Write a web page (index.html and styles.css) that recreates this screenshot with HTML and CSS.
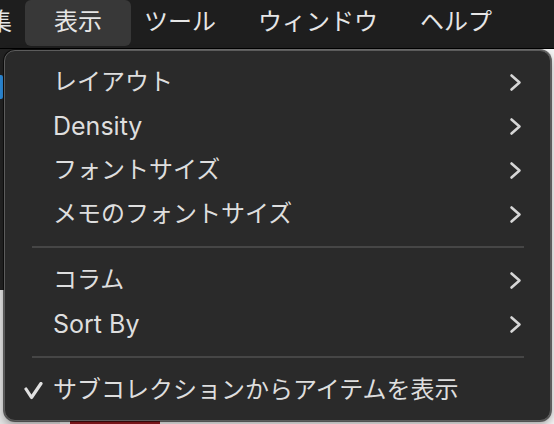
FILE: index.html
```html
<!DOCTYPE html>
<html lang="ja">
<head>
<meta charset="utf-8">
<title>表示メニュー</title>
<link rel="stylesheet" href="styles.css">
</head>
<body>
<header class="menubar">
  <div class="mb-item">編集</div>
  <div class="mb-item active">表示</div>
  <div class="mb-item">ツール</div>
  <div class="mb-item">ウィンドウ</div>
  <div class="mb-item">ヘルプ</div>
</header>
<main class="app">
  <div class="side">
    <div class="side-dark"><span class="side-mark"></span></div>
    <div class="side-light"></div>
  </div>
  <div class="content">
    <div class="content-body"></div>
    <div class="content-foot"><span class="foot-red"></span></div>
  </div>
</main>
<nav class="menu">
  <div class="row"><span class="check"></span><span class="label">レイアウト</span><svg class="chev" viewBox="0 0 13 19"><polyline points="2.5,2.5 10.5,9.5 2.5,16.5"/></svg></div>
  <div class="row"><span class="check"></span><span class="label latin">Density</span><svg class="chev" viewBox="0 0 13 19"><polyline points="2.5,2.5 10.5,9.5 2.5,16.5"/></svg></div>
  <div class="row"><span class="check"></span><span class="label">フォントサイズ</span><svg class="chev" viewBox="0 0 13 19"><polyline points="2.5,2.5 10.5,9.5 2.5,16.5"/></svg></div>
  <div class="row"><span class="check"></span><span class="label">メモのフォントサイズ</span><svg class="chev" viewBox="0 0 13 19"><polyline points="2.5,2.5 10.5,9.5 2.5,16.5"/></svg></div>
  <div class="sep"></div>
  <div class="row"><span class="check"></span><span class="label">コラム</span><svg class="chev" viewBox="0 0 13 19"><polyline points="2.5,2.5 10.5,9.5 2.5,16.5"/></svg></div>
  <div class="row"><span class="check"></span><span class="label latin">Sort By</span><svg class="chev" viewBox="0 0 13 19"><polyline points="2.5,2.5 10.5,9.5 2.5,16.5"/></svg></div>
  <div class="sep"></div>
  <div class="row"><svg class="check" viewBox="0 0 19 18"><polyline points="2,7 7.5,15.5 17,1.5"/></svg><span class="label">サブコレクションからアイテムを表示</span><span></span></div>
</nav>
</body>
</html>
```

FILE: styles.css
```css
* { box-sizing: border-box; }

html, body {
  margin: 0;
  height: 100%;
}

body {
  width: 554px;
  height: 424px;
  overflow: hidden;
  background: #ececec;
  font-family: Inter, "Noto Sans CJK JP", sans-serif;
  color: #dedede;
  display: flex;
  flex-direction: column;
}

.menubar {
  height: 49px;
  flex: none;
  background: #1e1e1e;
  border-bottom: 1px solid #000;
  display: flex;
  align-items: flex-start;
  font-size: 24px;
  white-space: nowrap;
}

.mb-item {
  height: 46px;
  line-height: 44px;
  padding: 0 21px;
  color: #e6e6e6;
}

.mb-item:first-child {
  margin-left: -57px;
}

.mb-item.active {
  background: #383838;
  border-radius: 6px;
  padding: 0 29px;
  margin: 0 -8px;
}

.app {
  flex: 1;
  display: flex;
  min-height: 0;
}

.side {
  width: 60px;
  display: flex;
  flex-direction: column;
}

.side-dark {
  height: 241px;
  background: #232323;
  position: relative;
}

.side-mark {
  position: absolute;
  left: 0;
  top: 26px;
  width: 3px;
  height: 24px;
  background: #2d8fe0;
  border-radius: 0 2px 2px 0;
}

.side-light {
  flex: 1;
  background: #e4e4e4;
}

.content {
  flex: 1;
  display: flex;
  flex-direction: column;
}

.content-body {
  flex: 1;
  background: #f4f4f4;
}

.content-foot {
  height: 6px;
  background: #f6f6f6;
  display: flex;
}

.foot-red {
  width: 90px;
  margin-left: 10px;
  background: #9a1b22;
}

.menu {
  position: absolute;
  left: 4px;
  top: 50px;
  width: 547px;
  height: 371px;
  background: #2a2a2a;
  border: 1px solid #5c5c5c;
  border-radius: 11px;
  box-shadow: 0 0 0 1px rgba(0, 0, 0, 0.55), 0 4px 10px rgba(0, 0, 0, 0.35);
  padding: 9px 0 7px;
  font-size: 24px;
}

.row {
  height: 44px;
  display: grid;
  grid-template-columns: 48px 1fr auto;
  align-items: center;
  padding-right: 28px;
  white-space: nowrap;
}

.label {
  color: #dedede;
  line-height: 44px;
}

.label.latin {
  font-size: 25px;
}

.check {
  justify-self: end;
  width: 19px;
  height: 18px;
  margin-right: 10px;
  margin-top: 2px;
  fill: none;
  stroke: #e0e0e0;
  stroke-width: 3.2;
  stroke-linecap: round;
  stroke-linejoin: round;
}

.chev {
  width: 13px;
  height: 19px;
  fill: none;
  stroke: #d6d6d6;
  stroke-width: 2.6;
  stroke-linecap: round;
  stroke-linejoin: round;
}

.sep {
  height: 22px;
  display: flex;
  align-items: center;
  padding: 0 26px 0 27px;
}

.sep::before {
  content: "";
  flex: 1;
  height: 2px;
  background: #464646;
}
```
